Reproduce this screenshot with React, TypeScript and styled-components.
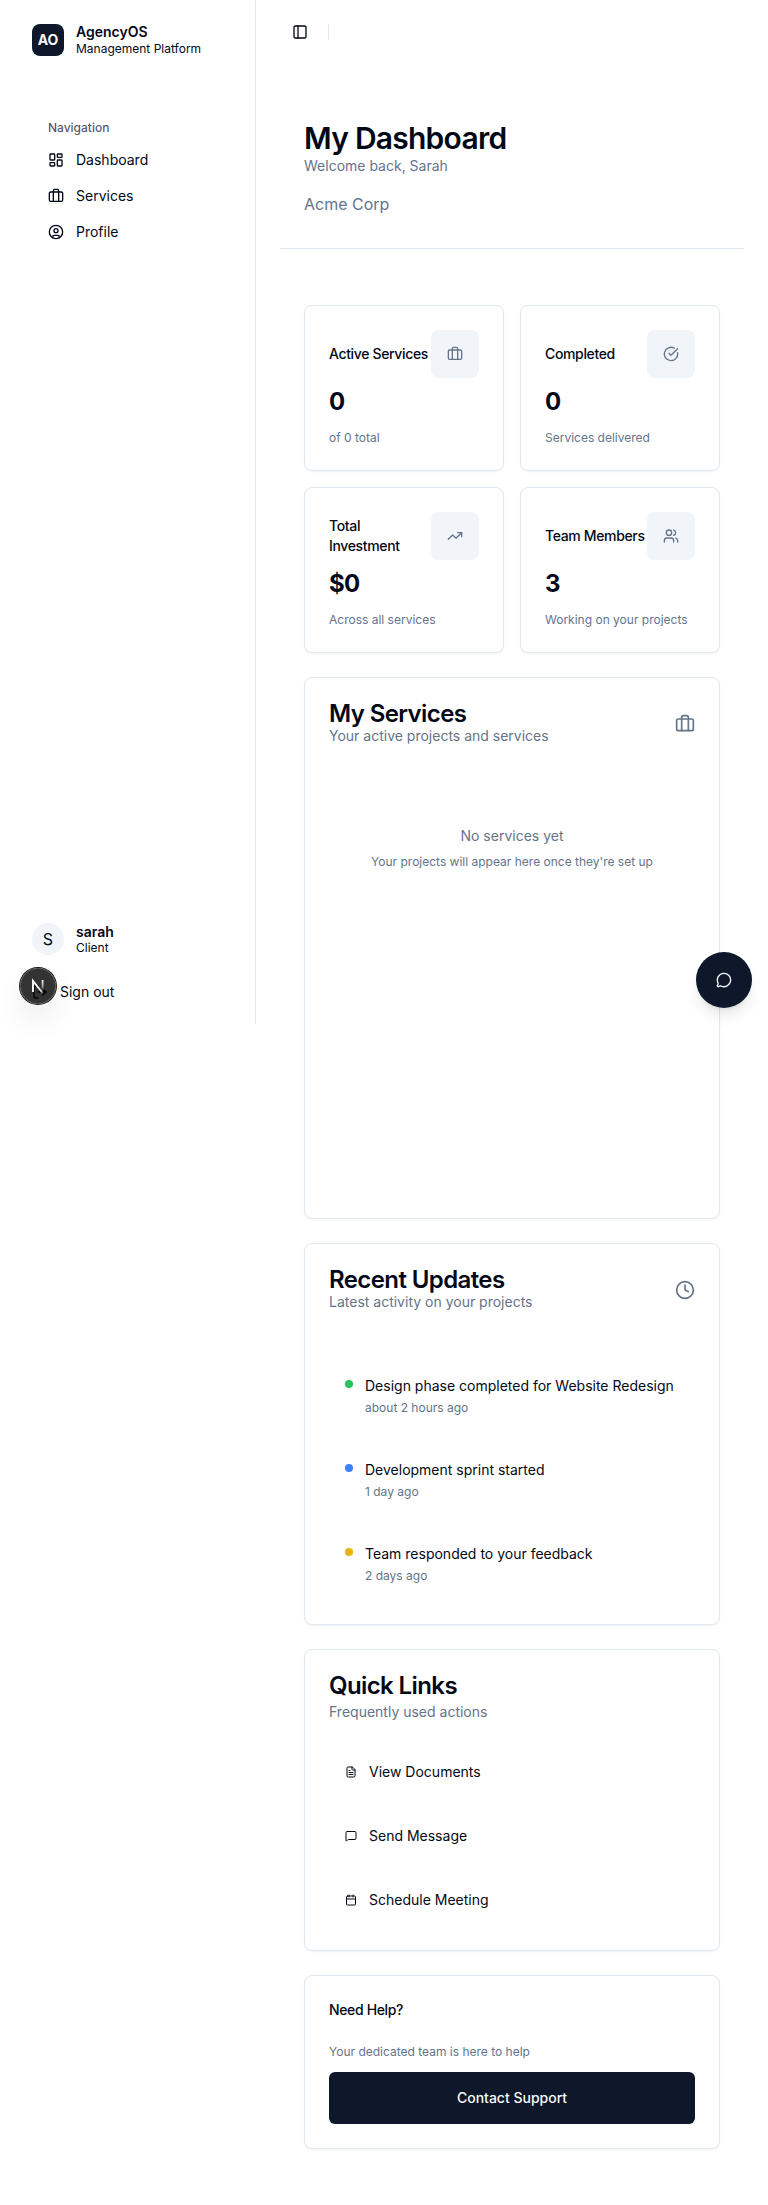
import React from "react";
import styled, { createGlobalStyle } from "styled-components";
import {
  Briefcase,
  Calendar,
  CircleCheckBig,
  CircleUser,
  Clock,
  FileText,
  LayoutDashboard,
  LogOut,
  MessageCircle,
  MessageSquare,
  PanelLeft,
  TrendingUp,
  Users,
} from "lucide-react";

const color = {
  ink: "#020817",
  navy: "#0f172a",
  muted: "#64748b",
  border: "#e2e8f0",
  soft: "#f1f5f9",
  light: "#f8fafc",
};

const GlobalStyle = createGlobalStyle`
  *, *::before, *::after { box-sizing: border-box; }
  body {
    margin: 0;
    background: #fff;
    color: ${color.ink};
    font-family: Inter, "Liberation Sans", sans-serif;
    font-size: 14px;
    line-height: 20px;
    -webkit-font-smoothing: antialiased;
  }
  h1, h2, h3, p { margin: 0; }
  svg { flex-shrink: 0; display: block; }
`;

const Page = styled.div`
  position: relative;
  display: flex;
  align-items: flex-start;
  width: 768px;
  height: 2205px;
`;

const Sidebar = styled.aside`
  display: flex;
  flex-direction: column;
  width: 256px;
  height: 1024px;
  flex-shrink: 0;
  border-right: 1px solid ${color.border};
`;

const Identity = styled.div<{ $top: number }>`
  display: flex;
  align-items: center;
  gap: 12px;
  padding: ${(p) => p.$top}px 32px 0;
`;

const Logo = styled.div`
  display: grid;
  place-items: center;
  width: 32px;
  height: 32px;
  border-radius: 8px;
  background: ${color.navy};
  color: ${color.light};
  font-weight: 700;
`;

const Avatar = styled.div`
  display: grid;
  place-items: center;
  width: 32px;
  height: 32px;
  border-radius: 50%;
  background: ${color.soft};
  font-size: 16px;
`;

const IdentityText = styled.div<{ $second: number }>`
  display: flex;
  flex-direction: column;
  justify-content: center;
  height: 32px;
  font-size: 12px;
  line-height: ${(p) => p.$second}px;

  strong {
    font-size: 14px;
    line-height: 17px;
    font-weight: 600;
  }
`;

const Nav = styled.nav`
  display: flex;
  flex-direction: column;
  padding: 56px 48px 0;
`;

const NavLabel = styled.span`
  height: 30px;
  font-size: 12px;
  line-height: 32px;
  font-weight: 500;
  color: rgba(2, 8, 23, 0.7);
`;

const NavItem = styled.a`
  display: flex;
  align-items: center;
  gap: 12px;
  height: 36px;
`;

const SidebarFooter = styled.div`
  margin-top: auto;
  height: 101px;
`;

const SignOut = styled.button`
  display: flex;
  align-items: center;
  gap: 12px;
  margin: 27px 0 0 32px;
  padding: 0;
  height: 20px;
  border: 0;
  background: none;
  color: inherit;
  font: inherit;
`;

const Main = styled.main`
  flex: 1;
  min-width: 0;
`;

const TopBar = styled.header`
  display: flex;
  align-items: center;
  gap: 20px;
  height: 64px;
  padding: 0 36px;
`;

const Divider = styled.span`
  width: 1px;
  height: 16px;
  background: ${color.border};
`;

const PageHeading = styled.section`
  margin: 24px 24px 0;
  padding: 32px 24px;
  border-bottom: 1px solid ${color.border};
`;

const PageTitle = styled.h1`
  font-size: 30px;
  line-height: 36px;
  font-weight: 600;
  letter-spacing: -0.025em;
`;

const Subtitle = styled.p<{ $gap?: number }>`
  margin-top: ${(p) => p.$gap ?? 0}px;
  color: ${color.muted};
`;

const Company = styled.p`
  margin-top: 16px;
  font-size: 16px;
  line-height: 24px;
  color: ${color.muted};
`;

const Content = styled.div`
  display: flex;
  flex-direction: column;
  gap: 24px;
  padding: 56px 48px;
`;

const StatGrid = styled.div`
  display: grid;
  grid-template-columns: 1fr 1fr;
  gap: 16px;
`;

const Card = styled.section<{ $height?: number }>`
  height: ${(p) => (p.$height ? `${p.$height}px` : "auto")};
  padding: 24px;
  border: 1px solid ${color.border};
  border-radius: 8px;
  background: #fff;
  box-shadow: 0 1px 2px rgba(0, 0, 0, 0.05);
`;

const StatTop = styled.div`
  display: flex;
  align-items: center;
  justify-content: space-between;
  height: 48px;
`;

const SmallTitle = styled.h3`
  font-size: 14px;
  line-height: 20px;
  font-weight: 500;
  letter-spacing: -0.025em;
`;

const IconTile = styled.div`
  display: grid;
  place-items: center;
  flex-shrink: 0;
  width: 48px;
  height: 48px;
  border-radius: 8px;
  background: ${color.soft};
  color: ${color.muted};
`;

const StatValue = styled.div`
  margin-top: 8px;
  font-size: 24px;
  line-height: 32px;
  font-weight: 700;
  letter-spacing: -0.025em;
`;

const Note = styled.p<{ $gap?: number }>`
  margin-top: ${(p) => p.$gap ?? 0}px;
  font-size: 12px;
  line-height: 16px;
  color: ${color.muted};
`;

const CardHeader = styled.div`
  display: flex;
  align-items: center;
  justify-content: space-between;
  color: ${color.muted};
`;

const CardTitle = styled.h2`
  font-size: 24px;
  line-height: 24px;
  font-weight: 600;
  letter-spacing: -0.025em;
  color: ${color.ink};
`;

const Empty = styled.div`
  padding-top: 80px;
  text-align: center;
`;

const Updates = styled.div`
  display: flex;
  flex-direction: column;
  gap: 12px;
  margin-top: 48px;
`;

const Update = styled.div`
  display: flex;
  gap: 12px;
  padding: 16px;
`;

const Dot = styled.span<{ $color: string }>`
  width: 8px;
  height: 8px;
  margin-top: 4px;
  border-radius: 50%;
  background: ${(p) => p.$color};
`;

const Links = styled.div`
  display: flex;
  flex-direction: column;
  gap: 12px;
  margin-top: 24px;
`;

const QuickLink = styled.a`
  display: flex;
  align-items: center;
  gap: 12px;
  height: 52px;
  padding: 0 16px;
`;

const SupportButton = styled.button`
  display: block;
  width: 100%;
  height: 52px;
  margin-top: 12px;
  border: 0;
  border-radius: 6px;
  background: ${color.navy};
  color: ${color.light};
  font: inherit;
  font-weight: 500;
`;

const ChatButton = styled.button`
  position: absolute;
  top: 952px;
  right: 16px;
  display: grid;
  place-items: center;
  width: 56px;
  height: 56px;
  padding: 0;
  border: 0;
  border-radius: 50%;
  background: ${color.navy};
  color: ${color.light};
  box-shadow: 0 10px 15px -3px rgba(0, 0, 0, 0.1), 0 4px 6px -4px rgba(0, 0, 0, 0.1);
`;

const DevBadge = styled.div`
  position: absolute;
  top: 968px;
  left: 20px;
  display: grid;
  place-items: center;
  width: 36px;
  height: 36px;
  border-radius: 50%;
  background: rgba(0, 0, 0, 0.8);
  box-shadow: 0 0 0 1px #171717, inset 0 0 0 1px rgba(255, 255, 255, 0.14),
    0 16px 32px -8px rgba(0, 0, 0, 0.24);
`;

const stats = [
  { title: "Active Services", value: "0", note: "of 0 total", Icon: Briefcase },
  { title: "Completed", value: "0", note: "Services delivered", Icon: CircleCheckBig },
  { title: "Total Investment", value: "$0", note: "Across all services", Icon: TrendingUp },
  { title: "Team Members", value: "3", note: "Working on your projects", Icon: Users },
];

const updates = [
  { text: "Design phase completed for Website Redesign", time: "about 2 hours ago", dot: "#22c55e" },
  { text: "Development sprint started", time: "1 day ago", dot: "#3b82f6" },
  { text: "Team responded to your feedback", time: "2 days ago", dot: "#eab308" },
];

const navItems = [
  { label: "Dashboard", Icon: LayoutDashboard },
  { label: "Services", Icon: Briefcase },
  { label: "Profile", Icon: CircleUser },
];

const links = [
  { label: "View Documents", Icon: FileText },
  { label: "Send Message", Icon: MessageSquare },
  { label: "Schedule Meeting", Icon: Calendar },
];

function NextMark() {
  return (
    <svg width="36" height="36" viewBox="0 0 36 36" fill="none">
      <defs>
        <linearGradient id="stem" x1="0" y1="12" x2="0" y2="23" gradientUnits="userSpaceOnUse">
          <stop stopColor="#fff" />
          <stop offset="0.6" stopColor="#fff" stopOpacity="0.5" />
          <stop offset="1" stopColor="#fff" stopOpacity="0" />
        </linearGradient>
        <linearGradient id="slash" x1="18" y1="18" x2="24" y2="26" gradientUnits="userSpaceOnUse">
          <stop stopColor="#fff" />
          <stop offset="0.6" stopColor="#fff" stopOpacity="0.8" />
          <stop offset="1" stopColor="#fff" stopOpacity="0" />
        </linearGradient>
      </defs>
      <path d="M13 24V13L22.6 25" stroke="url(#slash)" strokeWidth="1.9" />
      <path d="M22.6 12V23" stroke="url(#stem)" strokeWidth="1.8" />
    </svg>
  );
}

export default function App() {
  return (
    <>
      <GlobalStyle />
      <Page>
        <Sidebar>
          <Identity $top={24}>
            <Logo>AO</Logo>
            <IdentityText $second={17}>
              <strong>AgencyOS</strong>
              <span>Management Platform</span>
            </IdentityText>
          </Identity>
          <Nav>
            <NavLabel>Navigation</NavLabel>
            {navItems.map(({ label, Icon }) => (
              <NavItem key={label}>
                <Icon size={16} />
                {label}
              </NavItem>
            ))}
          </Nav>
          <SidebarFooter>
            <Identity $top={0}>
              <Avatar>S</Avatar>
              <IdentityText $second={15}>
                <strong>sarah</strong>
                <span>Client</span>
              </IdentityText>
            </Identity>
            <SignOut>
              <LogOut size={16} />
              Sign out
            </SignOut>
          </SidebarFooter>
        </Sidebar>

        <Main>
          <TopBar>
            <PanelLeft size={16} />
            <Divider />
          </TopBar>
          <PageHeading>
            <PageTitle>My Dashboard</PageTitle>
            <Subtitle>Welcome back, Sarah</Subtitle>
            <Company>Acme Corp</Company>
          </PageHeading>
          <Content>
            <StatGrid>
              {stats.map(({ title, value, note, Icon }) => (
                <Card key={title}>
                  <StatTop>
                    <SmallTitle>{title}</SmallTitle>
                    <IconTile>
                      <Icon size={16} />
                    </IconTile>
                  </StatTop>
                  <StatValue>{value}</StatValue>
                  <Note $gap={12}>{note}</Note>
                </Card>
              ))}
            </StatGrid>

            <Card $height={542}>
              <CardHeader>
                <div>
                  <CardTitle>My Services</CardTitle>
                  <Subtitle>Your active projects and services</Subtitle>
                </div>
                <Briefcase size={20} />
              </CardHeader>
              <Empty>
                <Subtitle>No services yet</Subtitle>
                <Note $gap={8}>Your projects will appear here once they're set up</Note>
              </Empty>
            </Card>

            <Card>
              <CardHeader>
                <div>
                  <CardTitle>Recent Updates</CardTitle>
                  <Subtitle>Latest activity on your projects</Subtitle>
                </div>
                <Clock size={20} />
              </CardHeader>
              <Updates>
                {updates.map(({ text, time, dot }) => (
                  <Update key={text}>
                    <Dot $color={dot} />
                    <div>
                      <p>{text}</p>
                      <Note $gap={4}>{time}</Note>
                    </div>
                  </Update>
                ))}
              </Updates>
            </Card>

            <Card>
              <CardTitle>Quick Links</CardTitle>
              <Subtitle $gap={4}>Frequently used actions</Subtitle>
              <Links>
                {links.map(({ label, Icon }) => (
                  <QuickLink key={label}>
                    <Icon size={12} />
                    {label}
                  </QuickLink>
                ))}
              </Links>
            </Card>

            <Card>
              <SmallTitle>Need Help?</SmallTitle>
              <Note $gap={24}>Your dedicated team is here to help</Note>
              <SupportButton>Contact Support</SupportButton>
            </Card>
          </Content>
        </Main>

        <ChatButton aria-label="Open chat">
          <MessageCircle size={16} />
        </ChatButton>
        <DevBadge>
          <NextMark />
        </DevBadge>
      </Page>
    </>
  );
}
